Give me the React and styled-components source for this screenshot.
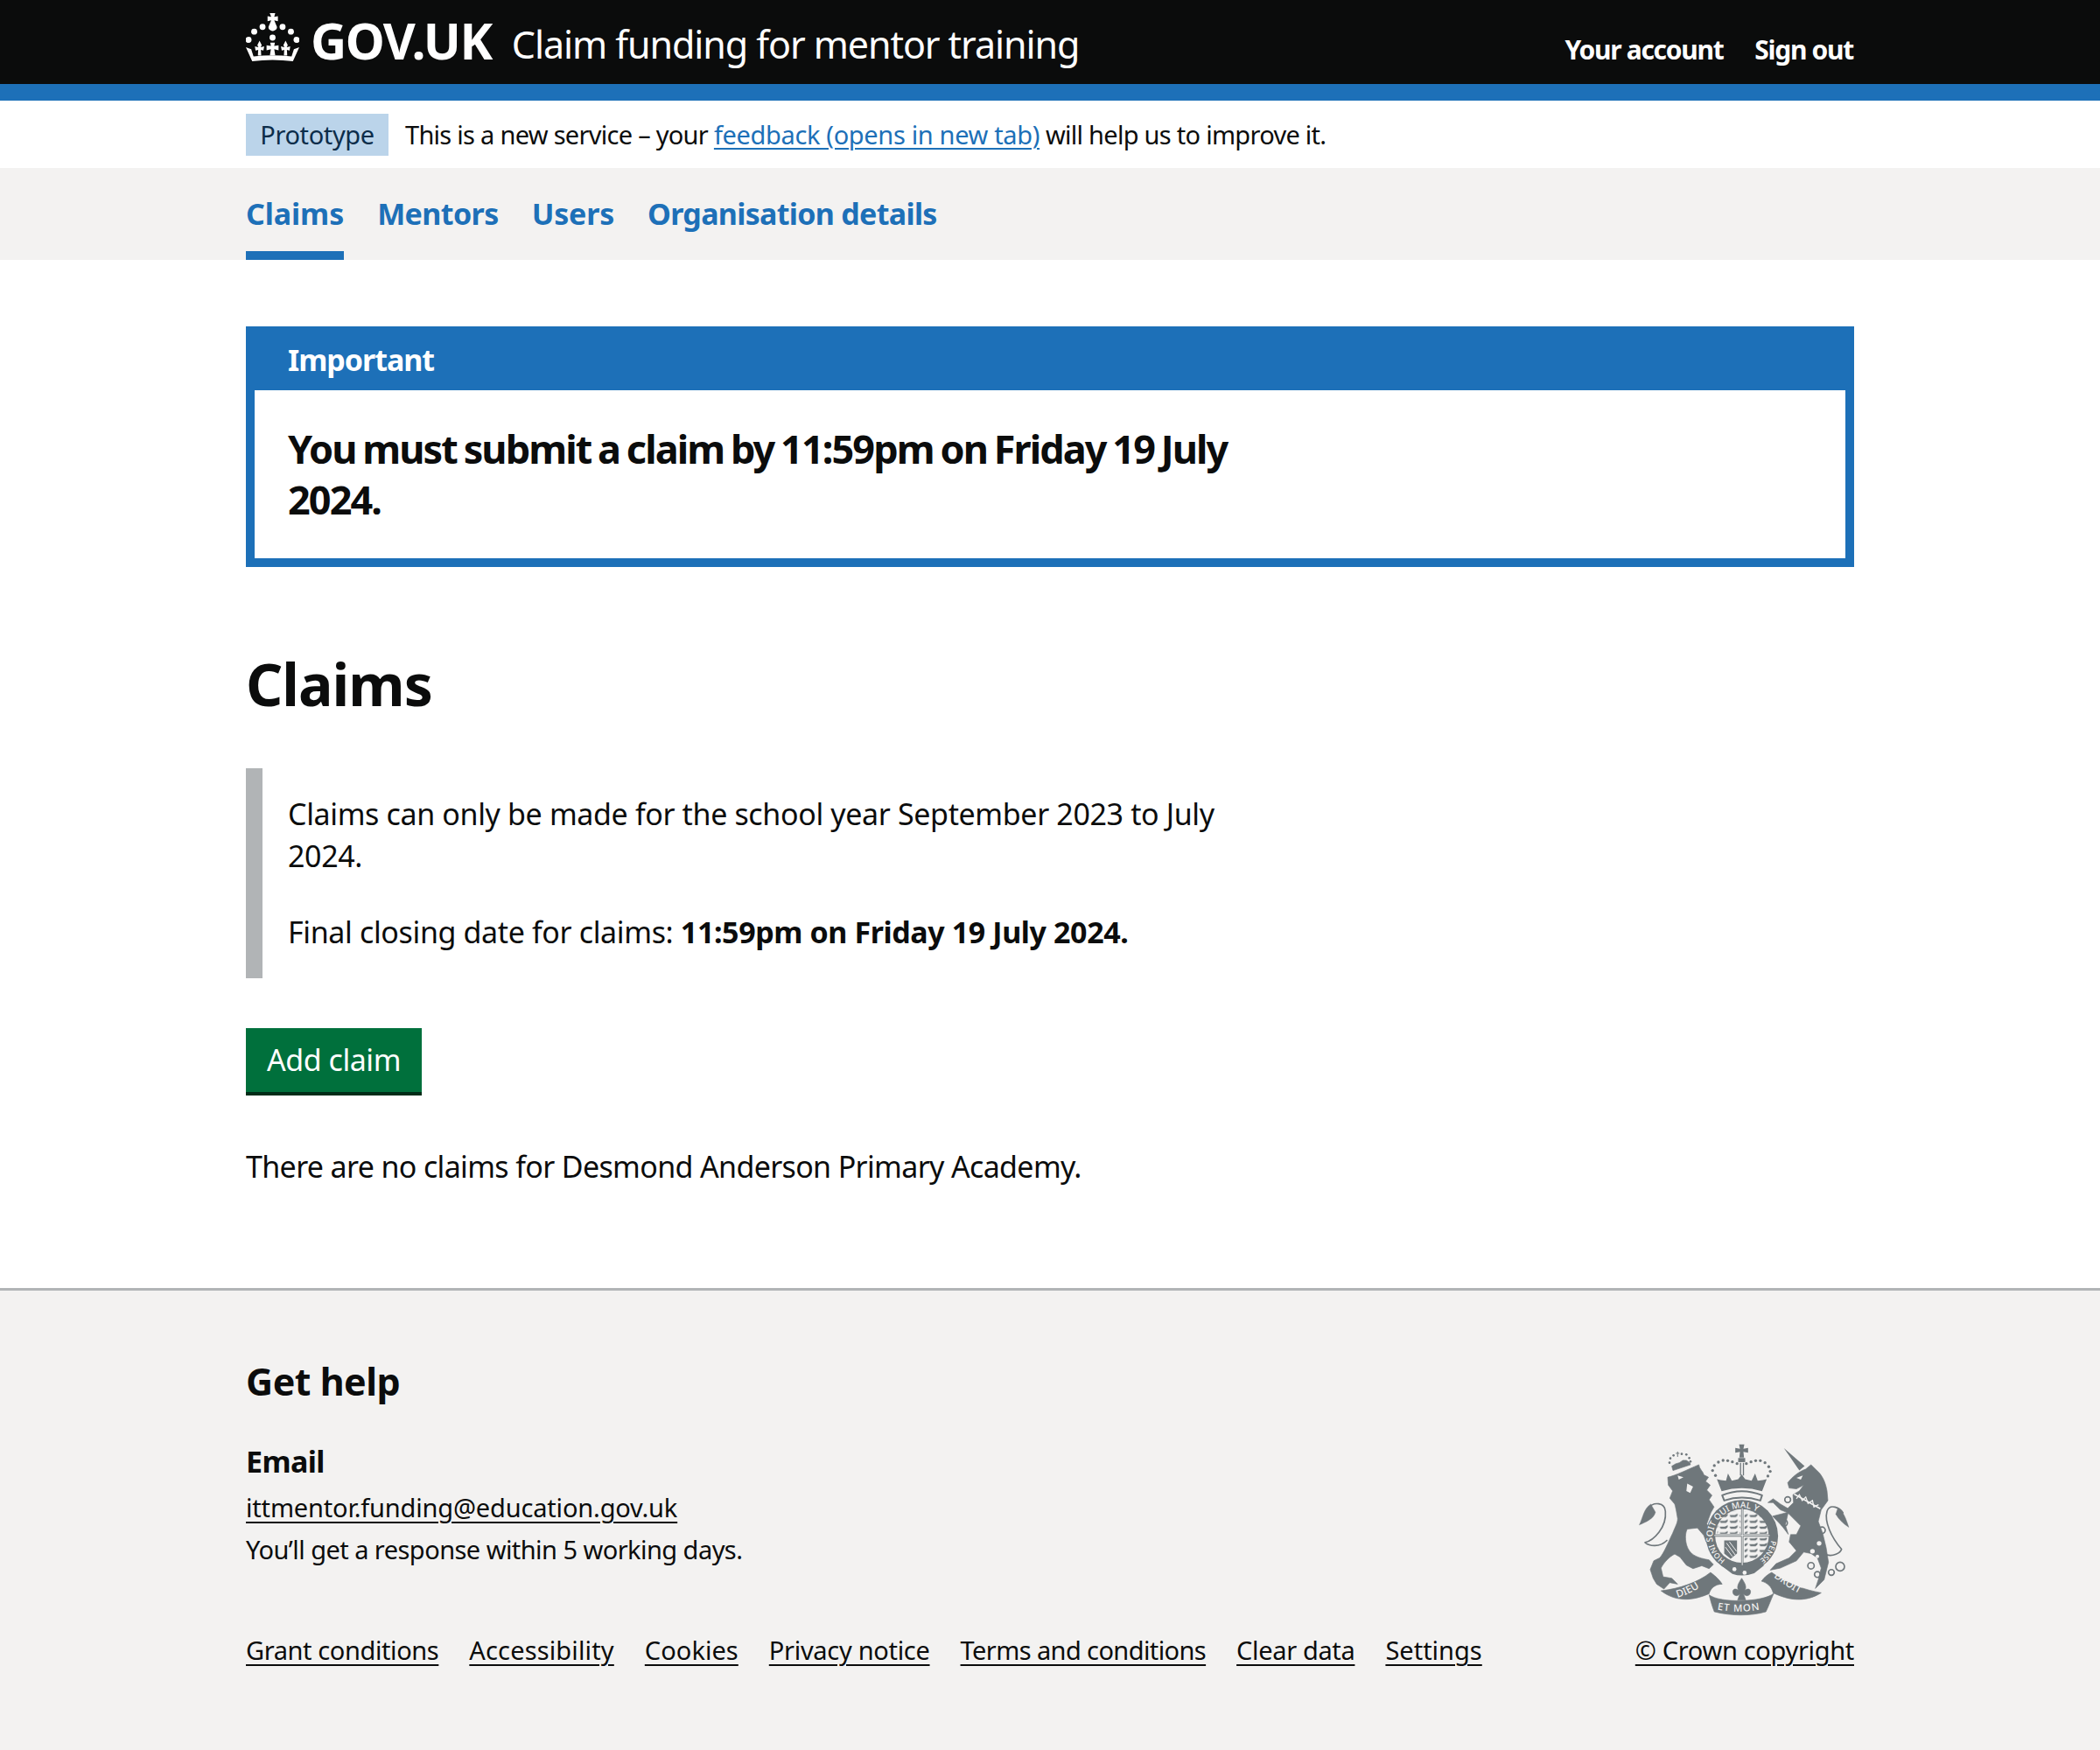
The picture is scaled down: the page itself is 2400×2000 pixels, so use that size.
import React from "react";
import styled, { createGlobalStyle } from "styled-components";

const Global = createGlobalStyle`
  html, body { margin: 0; padding: 0; background: #fff; }
  body { font-family: "Noto Sans", "Open Sans", Arial, sans-serif; color: #0b0c0c; }
`;

const Container = styled.div`
  width: 1838px;
  margin: 0 auto;
`;

const Header = styled.header`
  background: #0b0c0c;
  border-bottom: 19px solid #1d70b8;
  color: #fff;
`;
const HeaderInner = styled(Container)`
  display: flex;
  justify-content: space-between;
  height: 96px;
`;
const Brand = styled.div`
  display: flex;
  align-items: flex-start;
`;
const CrownSvg = styled.svg`
  display: block;
  width: 61px;
  height: 58px;
  margin-top: 14px;
  fill: #fff;
`;
const Wordmark = styled.span`
  font-size: 57px;
  line-height: 66px;
  font-weight: 700;
  letter-spacing: -1.5px;
  margin: 13px 0 0 13px;
`;
const ServiceName = styled.span`
  font-size: 43px;
  line-height: 60px;
  letter-spacing: -1.08px;
  margin: 21px 0 0 23px;
`;
const AccountNav = styled.nav`
  display: flex;
  gap: 36px;
  padding: 36px 1px 0 0;
`;
const AccountLink = styled.a`
  font-size: 30px;
  line-height: 42px;
  font-weight: 700;
  letter-spacing: -1.3px;
  color: #fff;
`;

const PhaseBanner = styled(Container)`
  display: flex;
  align-items: center;
  height: 77px;
`;
const Tag = styled.strong`
  display: block;
  background: #bbd4ea;
  color: #0c2d4a;
  font-weight: 400;
  font-size: 29px;
  line-height: 48px;
  width: 163px;
  text-align: center;
  letter-spacing: -0.4px;
  margin-right: 19px;
`;
const PhaseText = styled.span`
  font-size: 29px;
  line-height: 48px;
  letter-spacing: -0.72px;
`;
const BlueLink = styled.a`
  color: #1d70b8;
  letter-spacing: -0.35px;
  text-decoration: underline;
  text-underline-offset: 4px;
  text-decoration-thickness: 2px;
`;

const SubNavBar = styled.div`
  background: #f3f2f1;
  height: 105px;
`;
const SubNav = styled(Container)`
  display: flex;
  gap: 38px;
  height: 105px;
`;
const SubNavLink = styled.a`
  display: block;
  font-size: 34px;
  line-height: 44px;
  font-weight: 700;
  letter-spacing: ${(p) => p.$ls}px;
  color: #1d70b8;
  padding-top: 30px;
  box-sizing: border-box;
  border-bottom: 10px solid ${(p) => (p.$active ? "#1d70b8" : "transparent")};
`;

const Main = styled(Container)`
  padding-top: 76px;
  padding-bottom: 115px;
`;
const Banner = styled.section`
  border: 10px solid #1d70b8;
  background: #1d70b8;
`;
const BannerTitle = styled.h2`
  margin: 0;
  color: #fff;
  font-size: 34px;
  line-height: 56px;
  height: 63px;
  font-weight: 700;
  letter-spacing: -1.03px;
  padding-left: 38px;
`;
const BannerBody = styled.div`
  background: #fff;
  padding: 38px;
`;
const BannerHeading = styled.p`
  margin: 0;
  max-width: 1120px;
  font-size: 45px;
  line-height: 58px;
  font-weight: 700;
  letter-spacing: -1.9px;
  word-spacing: -2.1px;
`;
const Title = styled.h1`
  margin: 88px 0 0;
  font-size: 66px;
  line-height: 90px;
  font-weight: 700;
  letter-spacing: -1px;
`;
const Inset = styled.div`
  margin-top: 52px;
  border-left: 19px solid #b1b4b6;
  padding: 28px 0 29px 29px;
`;
const InsetText = styled.p`
  margin: 0;
  max-width: 1120px;
  font-size: 34px;
  line-height: 48px;
  letter-spacing: -0.36px;
  & + & {
    margin-top: 39px;
  }
  strong {
    letter-spacing: -0.4px;
  }
`;
const Button = styled.button`
  display: block;
  margin-top: 57px;
  border: 0;
  background: #00703c;
  box-shadow: 0 4px 0 #002d18;
  color: #fff;
  font-family: inherit;
  font-size: 34px;
  line-height: 73px;
  letter-spacing: -0.45px;
  height: 73px;
  width: 201px;
  padding: 0;
`;
const Empty = styled.p`
  margin: 61px 0 0;
  font-size: 34px;
  line-height: 48px;
  letter-spacing: -0.65px;
`;

const Footer = styled.footer`
  background: #f3f2f1;
  border-top: 3px solid #b1b4b6;
  height: 528px;
  box-sizing: border-box;
`;
const FooterInner = styled(Container)`
  display: flex;
  justify-content: space-between;
  align-items: flex-end;
  padding-top: 75px;
`;
const FooterMain = styled.div``;
const FooterHeading = styled.h2`
  margin: 0;
  font-size: 43px;
  line-height: 58px;
  font-weight: 700;
  letter-spacing: -0.5px;
`;
const FooterSub = styled.h3`
  margin: 39px 0 0;
  font-size: 34px;
  line-height: 46px;
  font-weight: 700;
  letter-spacing: -0.6px;
`;
const FooterText = styled.p`
  margin: ${(p) => p.$gap}px 0 0;
  font-size: 29px;
  line-height: 48px;
  letter-spacing: ${(p) => p.$ls}px;
`;
const FooterLink = styled.a`
  color: #0b0c0c;
  letter-spacing: ${(p) => p.$ls}px;
  text-decoration: underline;
  text-underline-offset: 5px;
  text-decoration-thickness: 2px;
`;
const FooterLinks = styled.div`
  display: flex;
  gap: 35px;
  margin-top: 67px;
  font-size: 29px;
  line-height: 48px;
`;
const Copyright = styled.div`
  display: flex;
  flex-direction: column;
  align-items: center;
  font-size: 29px;
  line-height: 48px;
`;
const CrestSvg = styled.svg`
  display: block;
  width: 242px;
  height: 198px;
  margin-bottom: 15px;
`;

const CrownIcon = () => (
  <CrownSvg viewBox="0 0 32 30" aria-hidden="true">
    <path d="M14.3 .3h3.300l-.6 2.300 2.200-.5v3.100l-2.200-.5 1.600 3.800c.3 1.200-.8 2.500-2.500 2.500s-2.800-1.300-2.500-2.500l1.600-3.800-2.200.5V2.100l2.200.5z" />
    {[[1.6, 16.3], [5, 11.4], [10, 8.6], [22, 8.6], [27, 11.4], [30.4, 16.3], [16, 15]].map(([x, y]) => (
      <circle key={x} cx={x} cy={y} r="1.8" />
    ))}
    <path d="M0 20.800L3.200 22l1.400 4.300Q16 24.900 27.400 26.300L28.800 22 32 20.800l-3.800 8.400Q16 27.600 3.800 29.200z" />
    <path d="M14.600 18h2.800l-.4 2 2.600-.4v3L17 22l.6 3.600h-3.200L15 22l-2.600.6v-3l2.600.4z" />
    <path d="M8.200 16.800l1.300 2.700-.6 1.300 2.100-.6-.5 2.600-1.500-.4.2 3.400h-2l.2-3.400-1.600.4-.4-2.600 2.100.6-.6-1.300z" />
    <path d="M23.800 16.800l1.300 2.700-.6 1.300 2.100-.6-.4 2.600-1.600-.4.2 3.400h-2l.2-3.400-1.500.4-.5-2.600 2.100.6-.6-1.300z" />
  </CrownSvg>
);

const G = "#6f777b";
const L = "#f3f2f1";
const crownDots = [[362, 172], [352, 155], [358, 138], [372, 126], [388, 120], [404, 121], [420, 125], [436, 131], [468, 131], [484, 125], [500, 121], [516, 121], [532, 128], [545, 142], [550, 158], [542, 174]];

const Crest = () => (
  <CrestSvg viewBox="100 60 725 595" aria-hidden="true">
    <defs>
      <path id="ringTop" d="M353 400 A102 102 0 0 1 556 372" />
      <path id="ringRight" d="M553 395 A101 101 0 0 1 510 464" />
      <path id="ringLeft" d="M396 462 A100 100 0 0 1 353 392" />
      <path id="dieu" d="M232 592 Q290 574 340 532" />
      <path id="etmon" d="M368 632 Q450 648 534 628" />
      <path id="droit" d="M562 520 Q620 566 682 592" />
      <pattern id="lions" width="34" height="20" patternUnits="userSpaceOnUse">
        <path d="M2 8 H20 L30 3 V9 L24 15 H6 Z" fill={G} />
      </pattern>
    </defs>
    <g fill={G} stroke={G} strokeLinejoin="round">
      <path strokeWidth="2" d="M198 178 C225 172 265 152 305 135 C306 150 320 158 322 170 L338 178 L328 192 L344 205 L332 222 L350 240 L340 255 L357 280 L346 300 L332 338 L350 365 L365 390 L362 405 L330 400 L322 378 L300 352 L265 356 C255 375 258 410 272 430 C282 445 300 455 340 462 L355 478 L340 492 L315 482 L285 492 L262 480 L240 452 L222 442 C205 450 185 470 175 490 L182 520 L212 525 L232 545 L205 540 L185 562 L160 545 L148 525 L138 495 L150 465 L170 455 C185 440 200 400 215 370 C225 345 232 335 232 320 C228 295 225 280 222 270 L205 250 L215 225 L200 205 Z" />
      <path fill="none" strokeWidth="5" strokeLinecap="round" d="M195 395 C170 420 135 415 120 402 C150 395 195 350 190 295 C188 265 150 260 130 285" />
      <path strokeWidth="1" d="M140 270 C115 285 112 320 100 342 C122 332 150 322 156 298 Z" />
      <path strokeWidth="2" d="M216 155 L212 140 L225 132 L238 128 L250 120 L262 120 L274 128 L276 135 Z" />
      <path strokeWidth="3" d="M226 96 H238 M232 90 V108" fill="none" />
      {[[204, 128], [207, 113], [218, 103], [246, 98], [262, 100], [272, 112], [276, 124]].map(([x, y]) => (
        <circle key={x} cx={x} cy={y} r="4" strokeWidth="0" />
      ))}
      <path strokeWidth="0" d="M443 65 H461 L458 80 L474 77 V94 L458 91 L460 110 H444 L446 91 L430 94 V77 L446 80 Z" />
      <path strokeWidth="0" d="M440 112 H464 V126 H440 Z" />
      <path strokeWidth="0" d="M446 128 H450 V172 H446 Z M456 128 H460 V172 H456 Z" />
      {crownDots.map(([x, y]) => (
        <circle key={x} cx={x} cy={y} r="5" strokeWidth="0" />
      ))}
      <path strokeWidth="0" d="M367 185 L380 188 L398 190 L405 165 L418 190 L440 185 L452 168 L464 185 L486 190 L498 165 L507 190 L525 188 L538 185 L522 226 Q452 205 383 226 Z" />
      <path fill={L} strokeWidth="6" d="M385 240 Q452 212 522 240 L516 258 Q452 238 392 258 Z" />
      <circle cx="453" cy="380" r="124" strokeWidth="0" />
      <path strokeWidth="0" d="M380 480 L420 510 Q455 522 495 508 L530 480 Z" />
      <path strokeWidth="0" d="M597 78 L668 140 L650 155 Z" />
      <path strokeWidth="2" d="M610 197 C625 178 645 160 672 150 L690 135 L710 155 C728 170 740 195 745 225 L748 258 L725 290 L715 330 L730 370 L742 420 L750 470 L735 530 L705 560 L715 530 L725 490 L712 455 L690 440 L665 435 L640 465 L585 490 L550 497 L570 475 L615 455 L640 430 L615 400 L620 375 L640 375 L655 345 L640 330 L610 300 L585 290 L560 265 L542 265 L560 252 L585 270 L610 285 L630 265 L628 238 L650 225 L665 205 L640 218 L615 215 Z" />
      <path strokeWidth="2" d="M612 298 L558 312 L590 345 L612 374 L602 342 Z" />
      <path fill="none" strokeWidth="5" strokeLinecap="round" d="M745 445 C765 450 790 440 795 425 C760 385 735 330 745 295 C755 265 790 285 800 300" />
      <path strokeWidth="1" d="M782 284 C800 292 810 320 820 350 C800 338 785 322 775 305 Z" />
      <path strokeWidth="2" d="M175 568 C240 560 300 540 345 505 C365 520 375 530 385 545 C360 545 345 560 340 578 C290 600 230 610 175 568 Z" />
      <path strokeWidth="2" d="M340 582 C345 600 350 620 358 640 C420 655 480 655 535 640 C545 620 552 600 562 577 C525 607 380 612 340 582 Z" />
      <path strokeWidth="2" d="M520 535 C530 520 545 510 555 505 C610 545 670 565 725 575 C670 610 610 600 560 575 C555 555 540 540 520 535 Z" />
      <path strokeWidth="2" d="M452 525 C465 545 470 555 462 568 C475 555 488 565 480 580 C470 590 462 582 458 578 L466 600 H438 L446 578 C442 582 434 590 424 580 C416 565 429 555 442 568 C434 555 439 545 452 525 Z" />
    </g>
    <circle cx="453" cy="380" r="92" fill={L} />
    <rect x="368" y="296" width="80" height="76" fill="url(#lions)" />
    <rect x="462" y="296" width="78" height="76" fill="url(#lions)" />
    <rect x="462" y="386" width="78" height="76" fill="url(#lions)" />
    <path d="M392 395 L436 395 L436 440 L414 458 L392 440 Z" fill={G} />
    <path d="M400 404 L430 445 M410 400 L434 432 M396 418 L420 450" stroke={L} strokeWidth="3" />
    <path d="M454 285 V480 M358 378 H548" stroke={G} strokeWidth="8" />
    <path d="M454 285 V480 M358 378 H548" stroke={L} strokeWidth="3" />
    <circle cx="427" cy="494" r="7" fill={L} />
    <circle cx="462" cy="506" r="7" fill={L} />
    <g fill={L} fontFamily="'Noto Sans', sans-serif" fontWeight="500">
      <text fontSize="30"><textPath href="#ringTop" startOffset="0">SOIT QUI MAL Y</textPath></text>
      <text fontSize="26"><textPath href="#ringRight" startOffset="0">PENSE</textPath></text>
      <text fontSize="26"><textPath href="#ringLeft" startOffset="0">HONI</textPath></text>
      <text fontSize="35"><textPath href="#dieu" startOffset="0">DIEU</textPath></text>
      <text fontSize="34" letterSpacing="3"><textPath href="#etmon" startOffset="0">ET MON</textPath></text>
      <text fontSize="34"><textPath href="#droit" startOffset="0">DROIT</textPath></text>
    </g>
    <g fill={L}>
      <path d="M232 172 L252 178 L236 186 Z M265 200 L285 210 L275 232 L262 225 Z" />
      <path d="M640 180 L662 172 L655 186 Z" />
      <circle cx="718" cy="405" r="8" />
      <circle cx="695" cy="432" r="8" />
      <circle cx="712" cy="450" r="6" />
    </g>
    <path d="M632 236 L722 286" stroke={L} strokeWidth="5" fill="none" />
    <path d="M640 252 L650 238 L660 258 L672 246 L680 268 L695 258 L700 280 L716 272" stroke={L} strokeWidth="4" fill="none" />
    <g fill="none" stroke={G} strokeWidth="5">
      <circle cx="610" cy="255" r="10" />
      <circle cx="598" cy="335" r="11" />
      <circle cx="728" cy="360" r="11" />
      <circle cx="690" cy="482" r="11" />
      <circle cx="712" cy="512" r="10" />
      <circle cx="760" cy="505" r="10" />
      <circle cx="790" cy="485" r="15" />
    </g>
  </CrestSvg>
);

const footerLinks = [
  ["Grant conditions", -0.4],
  ["Accessibility", 0.15],
  ["Cookies", 0.05],
  ["Privacy notice", -0.3],
  ["Terms and conditions", -0.6],
  ["Clear data", -0.35],
  ["Settings", 0],
];

const navLinks = [
  ["Claims", -0.1, true],
  ["Mentors", -0.6, false],
  ["Users", -0.2, false],
  ["Organisation details", -0.7, false],
];

export default function App() {
  return (
    <>
      <Global />
      <Header>
        <HeaderInner>
          <Brand>
            <CrownIcon />
            <Wordmark>GOV.UK</Wordmark>
            <ServiceName>Claim funding for mentor training</ServiceName>
          </Brand>
          <AccountNav>
            <AccountLink>Your account</AccountLink>
            <AccountLink>Sign out</AccountLink>
          </AccountNav>
        </HeaderInner>
      </Header>
      <PhaseBanner>
        <Tag>Prototype</Tag>
        <PhaseText>
          This is a new service – your <BlueLink>feedback (opens in new tab)</BlueLink> will help us to improve it.
        </PhaseText>
      </PhaseBanner>
      <SubNavBar>
        <SubNav>
          {navLinks.map(([label, ls, active]) => (
            <SubNavLink key={label} $ls={ls} $active={active}>{label}</SubNavLink>
          ))}
        </SubNav>
      </SubNavBar>
      <Main>
        <Banner>
          <BannerTitle>Important</BannerTitle>
          <BannerBody>
            <BannerHeading>You must submit a claim by 11:59pm on Friday 19 July 2024.</BannerHeading>
          </BannerBody>
        </Banner>
        <Title>Claims</Title>
        <Inset>
          <InsetText>Claims can only be made for the school year September 2023 to July 2024.</InsetText>
          <InsetText>
            Final closing date for claims: <strong>11:59pm on Friday 19 July 2024.</strong>
          </InsetText>
        </Inset>
        <Button>Add claim</Button>
        <Empty>There are no claims for Desmond Anderson Primary Academy.</Empty>
      </Main>
      <Footer>
        <FooterInner>
          <FooterMain>
            <FooterHeading>Get help</FooterHeading>
            <FooterSub>Email</FooterSub>
            <FooterText $gap={6} $ls={-0.17}>
              <FooterLink $ls={-0.17}>ittmentor.funding@education.gov.uk</FooterLink>
            </FooterText>
            <FooterText $gap={0} $ls={-0.55}>You’ll get a response within 5 working days.</FooterText>
            <FooterLinks>
              {footerLinks.map(([label, ls]) => (
                <FooterLink key={label} $ls={ls}>{label}</FooterLink>
              ))}
            </FooterLinks>
          </FooterMain>
          <Copyright>
            <Crest />
            <FooterLink $ls={-0.33}>© Crown copyright</FooterLink>
          </Copyright>
        </FooterInner>
      </Footer>
    </>
  );
}
